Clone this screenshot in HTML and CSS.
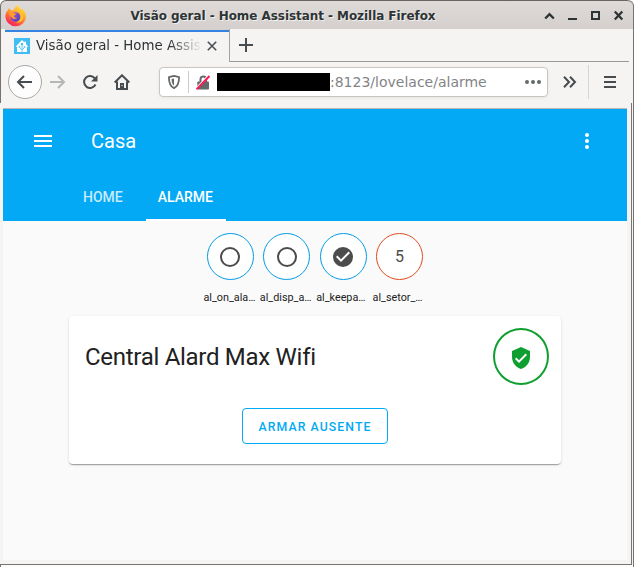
FILE: index.html
```html
<!DOCTYPE html>
<html lang="pt-BR">
<head>
<meta charset="utf-8">
<title>Visão geral - Home Assistant</title>
<link rel="stylesheet" href="styles.css">
</head>
<body>
<div class="window">
  <header class="titlebar">
    <svg class="firefox" width="22" height="23" viewBox="0 0 22 23">
      <defs>
        <linearGradient id="flame" x1="0.8" y1="0" x2="0.25" y2="1"><stop offset="0" stop-color="#fff04a"/><stop offset=".4" stop-color="#ffa62b"/><stop offset=".7" stop-color="#ff5a3c"/><stop offset="1" stop-color="#f5156c"/></linearGradient>
        <linearGradient id="globe" x1="0" y1="0" x2="1" y2="1"><stop offset="0" stop-color="#a04be8"/><stop offset="1" stop-color="#4b45b8"/></linearGradient>
      </defs>
      <path fill="url(#flame)" d="M3 5l1-2 2 2.500 3-.8C9.500 2.500 11 .8 13 0c.5 2 2 3 3.500 4.500l.8-.8c2.500 2.300 4 5.300 3.700 9A10.400 10.400 0 0 1 .4 12C.3 9 1.200 6.800 3 5z"/>
      <circle cx="10.500" cy="12" r="4.800" fill="url(#globe)"/>
      <path fill="#ff9a30" d="M3.500 7c2.500-1.300 4.500.2 5.800 1.300l2.400.3c-.2 1.300-2.500 1.600-2.700 2.500.2 1.500 1.800 2 3.200 1.500-1 1.800-4 2-5.200.2C5 12 4 9 3.500 7z"/>
      <path fill="#ffc52e" d="M11 5.500c3.500.5 5.300 3.300 4.700 6.500-.2 2.800-2 5-5 5.500 5 .8 8-2.500 7.500-6.500C17.800 7.500 14.500 4 11 5.500z"/>
    </svg>
    <h1 class="window-title">Visão geral - Home Assistant - Mozilla Firefox</h1>
    <svg class="window-buttons" width="80" height="12" viewBox="0 0 80 12" fill="none" stroke="#2e3436" stroke-width="2">
      <path d="M1.200 8.500l4.300-4.300 4.300 4.300" stroke-width="2.400"/><path d="M24 9h9"/><path d="M48 2h7v7h-7z"/><path d="M70.800 1.500l7.500 8m0-8l-7.500 8" stroke-width="2.300"/>
    </svg>
  </header>

  <div class="tabstrip">
    <div class="tab">
      <svg class="favicon" width="16" height="16" viewBox="0 0 16 16"><path fill="#41bdf5" d="M0 0h16v16H0z"/><path fill="#fff" d="M8 2l2.500 2.500V3.500H12v2.700l2.500 2.600H13V14H3V8.800H1.500z"/><path d="M8 14V6M8 12L5.500 9.500M8 12L10.500 9.500" fill="none" stroke="#6accf8"/><circle cx="8" cy="6" r="1.200" fill="#41bdf5"/><circle cx="5.500" cy="9" r="1" fill="#6accf8"/><circle cx="10.500" cy="9" r="1" fill="#6accf8"/></svg>
      <span class="tab-label">Visão geral - Home Assis</span>
      <svg class="tab-close" width="10" height="10" viewBox="0 0 10 10"><path d="M.8.8l8.400 8.400m0-8.400L.8 9.200" stroke="#4a5053" stroke-width="1.600"/></svg>
    </div>
    <div class="tab-space">
      <svg width="14" height="14" viewBox="0 0 14 14"><path d="M7 0v14M0 7h14" stroke="#464c4f" stroke-width="2"/></svg>
    </div>
  </div>

  <nav class="toolbar">
    <span class="back"><svg width="16" height="14" viewBox="0 0 16 14"><path d="M8 1L2 7l6 6M2 7h14" fill="none" stroke="#464c4f" stroke-width="2"/></svg></span>
    <svg class="forward" width="16" height="14" viewBox="0 0 16 14"><path d="M8 1l6 6-6 6M14 7H0" fill="none" stroke="#b5b6b6" stroke-width="2"/></svg>
    <svg class="reload" width="16" height="16" viewBox="0 0 16 16"><path d="M13 4.500A6 6 0 1 0 13.500 10.500" fill="none" stroke="#464c4f" stroke-width="2"/><path d="M15.500 1v6.500H9z" fill="#464c4f"/></svg>
    <svg class="home" width="16" height="16" viewBox="0 0 16 16"><path d="M.7 8.500L8 1.300l7.300 7.200M3 7.500V15h10V7.500" fill="none" stroke="#464c4f" stroke-width="2"/><path d="M6 9h4v6H6z" fill="#464c4f"/><path d="M7.500 11h1v1h-1z" fill="#fff"/></svg>
    <div class="urlbar">
      <svg class="shield" width="12" height="14" viewBox="0 0 12 14"><path d="M6 .9l5.100 1.300c0 5.500-1 9-5.100 10.900C1.900 11.200.9 7.700.9 2.200z" fill="none" stroke="#66696b" stroke-width="1.800" stroke-linejoin="round"/><path d="M6 3.500v7C4.300 9.500 3.600 7.500 3.600 4z" fill="#66696b"/></svg>
      <span class="url-divider"></span>
      <svg class="lock" width="14" height="15" viewBox="0 0 14 15"><path d="M4.500 7V4.300a2.800 2.800 0 0 1 5.600 0V7" fill="none" stroke="#66696b" stroke-width="2"/><rect x="1.300" y="6.500" width="11.700" height="8" rx="1" fill="#66696b"/><path d="M0 13.300L12.500.5" stroke="#fff" stroke-width="1.500"/><path d="M.5 14.300L13.500 1" stroke="#ff1a55" stroke-width="2"/></svg>
      <span class="redacted"></span>
      <span class="url">:8123/lovelace/alarme</span>
      <svg class="dots" width="16" height="4" viewBox="0 0 16 4" fill="#66696b"><circle cx="2" cy="2" r="2"/><circle cx="8" cy="2" r="2"/><circle cx="14" cy="2" r="2"/></svg>
    </div>
    <svg class="overflow" width="14" height="12" viewBox="0 0 14 12"><path d="M1 .8L6 6l-5 5.200M7 .8L12 6l-5 5.200" fill="none" stroke="#464c4f" stroke-width="2"/></svg>
    <span class="menu-divider"></span>
    <svg class="app-menu" width="12" height="12" viewBox="0 0 12 12"><path d="M0 1h12M0 6h12M0 11h12" stroke="#464c4f" stroke-width="2"/></svg>
  </nav>

  <div class="viewport">
    <main class="page">
      <header class="app-header">
        <div class="app-toolbar">
          <svg width="18" height="12" viewBox="0 0 18 12"><path d="M0 1h18M0 6h18M0 11h18" stroke="#fff" stroke-width="2"/></svg>
          <span class="app-title">Casa</span>
          <svg width="4" height="16" viewBox="0 0 4 16" fill="#fff"><circle cx="2" cy="2" r="2"/><circle cx="2" cy="8" r="2"/><circle cx="2" cy="14" r="2"/></svg>
        </div>
        <div class="views">
          <span class="view">HOME</span>
          <span class="view view-active">ALARME</span>
        </div>
      </header>

      <section class="badges">
        <div class="badge">
          <span class="ring"><svg width="24" height="24" viewBox="0 0 24 24"><circle cx="12" cy="12" r="9" fill="none" stroke="#4c4c4c" stroke-width="2"/></svg></span>
          <span class="badge-name">al_on_ala…</span>
        </div>
        <div class="badge">
          <span class="ring"><svg width="24" height="24" viewBox="0 0 24 24"><circle cx="12" cy="12" r="9" fill="none" stroke="#4c4c4c" stroke-width="2"/></svg></span>
          <span class="badge-name">al_disp_a…</span>
        </div>
        <div class="badge">
          <span class="ring"><svg width="24" height="24" viewBox="0 0 24 24"><path fill="#4c4c4c" d="M12 2a10 10 0 1 0 0 20 10 10 0 0 0 0-20zm-2 15l-5-5 1.410-1.410L10 14.170l7.590-7.590L19 8z"/></svg></span>
          <span class="badge-name">al_keepa…</span>
        </div>
        <div class="badge">
          <span class="ring ring-red">5</span>
          <span class="badge-name">al_setor_…</span>
        </div>
      </section>

      <section class="card">
        <div class="card-header">
          <h2>Central Alard Max Wifi</h2>
          <span class="alarm-state"><svg width="24" height="24" viewBox="0 0 24 24"><path fill="#0f9f31" d="M10 17l-4-4 1.410-1.410L10 14.170l6.590-6.590L18 9m-6-8L3 5v6c0 5.550 3.840 10.740 9 12 5.160-1.260 9-6.450 9-12V5z"/></svg></span>
        </div>
        <button class="arm">ARMAR AUSENTE</button>
      </section>
    </main>
  </div>
  <div class="desktop-edge"></div>
</div>
</body>
</html>
```

FILE: styles.css
```css
* { box-sizing: border-box; }
body { margin: 0; background: #fff; overflow: hidden; }
svg { display: block; flex: none; }

.window {
  width: 634px;
  height: 567px;
  display: flex;
  flex-direction: column;
  background: #f5f4f2;
  font-family: "DejaVu Sans", sans-serif;
  color: #2e3436;
  border-right: 1px solid #77716f;
  border-radius: 6px 6px 0 0;
}

.titlebar {
  height: 29px;
  flex: none;
  display: flex;
  align-items: center;
  padding: 2px 9px 0 4px;
  background: linear-gradient(#dedad7, #d5d0cd);
  border-top: 1px solid #6b6361;
  border-left: 1px solid #77716f;
  border-radius: 6px 6px 0 0;
}
.window-title {
  flex: 1;
  margin: 0 0 0 8px;
  padding-right: 13px;
  text-align: center;
  font-size: 12px;
  line-height: 16px;
  font-weight: 700;
  letter-spacing: -0.06px;
  text-shadow: 1px 1px 0 #f2f0ee;
  white-space: nowrap;
}

.tabstrip {
  height: 33px;
  flex: none;
  display: flex;
  padding: 0 4px 0 4px;
  border-left: 1px solid #77716f;
}
.tab {
  width: 225px;
  display: flex;
  align-items: center;
  padding-left: 9px;
  border-right: 1px solid #a5a2a0;
  background: linear-gradient(#d5d0cd 1px, #3584e4 1px, #3584e4 3px, #f5f4f2 3px);
}
.tab-label {
  width: 164px;
  margin-left: 6px;
  white-space: nowrap;
  font-size: 13.333px;
  line-height: 18px;
  -webkit-mask-image: linear-gradient(to right, #000 134px, transparent 166px);
  mask-image: linear-gradient(to right, #000 134px, transparent 166px);
}
.tab-close { margin-left: 7px; }
.tab-space {
  flex: 1;
  padding: 9px 0 0 9px;
  border-bottom: 1px solid #9b9896;
}

.toolbar {
  height: 41px;
  flex: none;
  display: flex;
  align-items: center;
  padding: 0 0 1px 7px;
  border-left: 1px solid #77716f;
}
.back {
  width: 34px;
  height: 34px;
  display: grid;
  place-items: center;
  padding-right: 2px;
  border: 1px solid #aaa8a6;
  border-radius: 50%;
  background: #fdfdfd;
}
.forward { margin-left: 8px; }
.reload { margin-left: 16px; }
.home { margin-left: 16px; }
.urlbar {
  width: 389px;
  height: 30px;
  display: flex;
  align-items: center;
  margin-left: 29px;
  padding: 0 6px 0 8px;
  border: 1px solid #cbc5c0;
  border-radius: 4px;
  background: #fff;
  box-shadow: 0 1px 3px rgba(0, 0, 0, .06);
}
.url-divider { width: 1px; height: 22px; margin: 0 7px 0 8px; background: #cccac7; }
.redacted { width: 113px; height: 18px; margin-left: 7px; background: #000; }
.url { flex: 1; color: #828486; font-size: 14px; line-height: 20px; white-space: nowrap; }
.overflow { margin-left: 15px; }
.menu-divider { width: 1px; height: 34px; margin: 0 15px 0 11px; background: #d8d5d3; }

.viewport {
  height: 462px;
  width: 632px;
  flex: none;
  padding: 5px 4px 4px 3px;
  border-right: 1px solid #777573;
  border-bottom: 1px solid #777573;
}
.page {
  height: 452px;
  border-top: 1px solid #bbb8b5;
  background: #fafafa;
  font-family: Roboto, sans-serif;
}
.desktop-edge { height: 2px; border-left: 1px solid #777573; background: #fcfcfb; }

.app-header { height: 112px; background: #03a9f4; color: #fff; }
.app-toolbar { height: 64px; display: flex; align-items: center; padding: 0 38px 0 31px; }
.app-title { flex: 1; margin-left: 39px; font-size: 20px; line-height: 24px; }
.views { height: 48px; display: flex; padding-left: 68px; }
.view {
  padding: 0 12px;
  font-size: 14px;
  font-weight: 500;
  line-height: 48px;
  color: rgba(255, 255, 255, .78);
}
.view + .view { margin-left: 11px; }
.view-active { width: 80px; color: #fff; box-shadow: inset 0 -2px #fff; }

.badges { display: flex; justify-content: center; gap: 4.400px; padding-top: 12px; }
.badge { width: 52px; display: flex; flex-direction: column; align-items: center; }
.ring {
  width: 47px;
  height: 47px;
  display: grid;
  place-items: center;
  border: 1px solid #039be5;
  border-radius: 50%;
  background: #fff;
  color: #4c4c4c;
  font-size: 16px;
}
.ring-red { border-color: #df4c1e; }
.badge-name {
  width: 52px;
  margin: 10px 2px 0 0;
  white-space: nowrap;
  font-size: 10.800px;
  line-height: 15px;
  color: #212121;
}

.card {
  width: 492px;
  height: 148px;
  margin: 11px auto 0;
  padding: 12px 12px 0 16px;
  border-radius: 4px;
  background: #fff;
  box-shadow: 0 2px 1px -1px rgba(0, 0, 0, .2), 0 1px 1px rgba(0, 0, 0, .14), 0 1px 3px rgba(0, 0, 0, .12);
}
.card-header { display: flex; justify-content: space-between; align-items: center; }
.card-header h2 {
  margin: 0;
  color: #212121;
  font-size: 24px;
  line-height: 32px;
  font-weight: 400;
  letter-spacing: -0.288px;
}
.alarm-state {
  width: 56px;
  height: 57px;
  display: grid;
  place-items: center;
  padding-top: 3px;
  border: 2px solid #0f9f31;
  border-radius: 50%;
}
.arm {
  display: block;
  width: 146px;
  height: 36px;
  margin: 23px auto 0 157px;
  padding: 1px 0 0;
  border: 1px solid #03a9f4;
  border-radius: 4px;
  background: transparent;
  color: #03a9f4;
  font: 500 12.250px/34px Roboto, sans-serif;
  letter-spacing: 1.093px;
}
```
